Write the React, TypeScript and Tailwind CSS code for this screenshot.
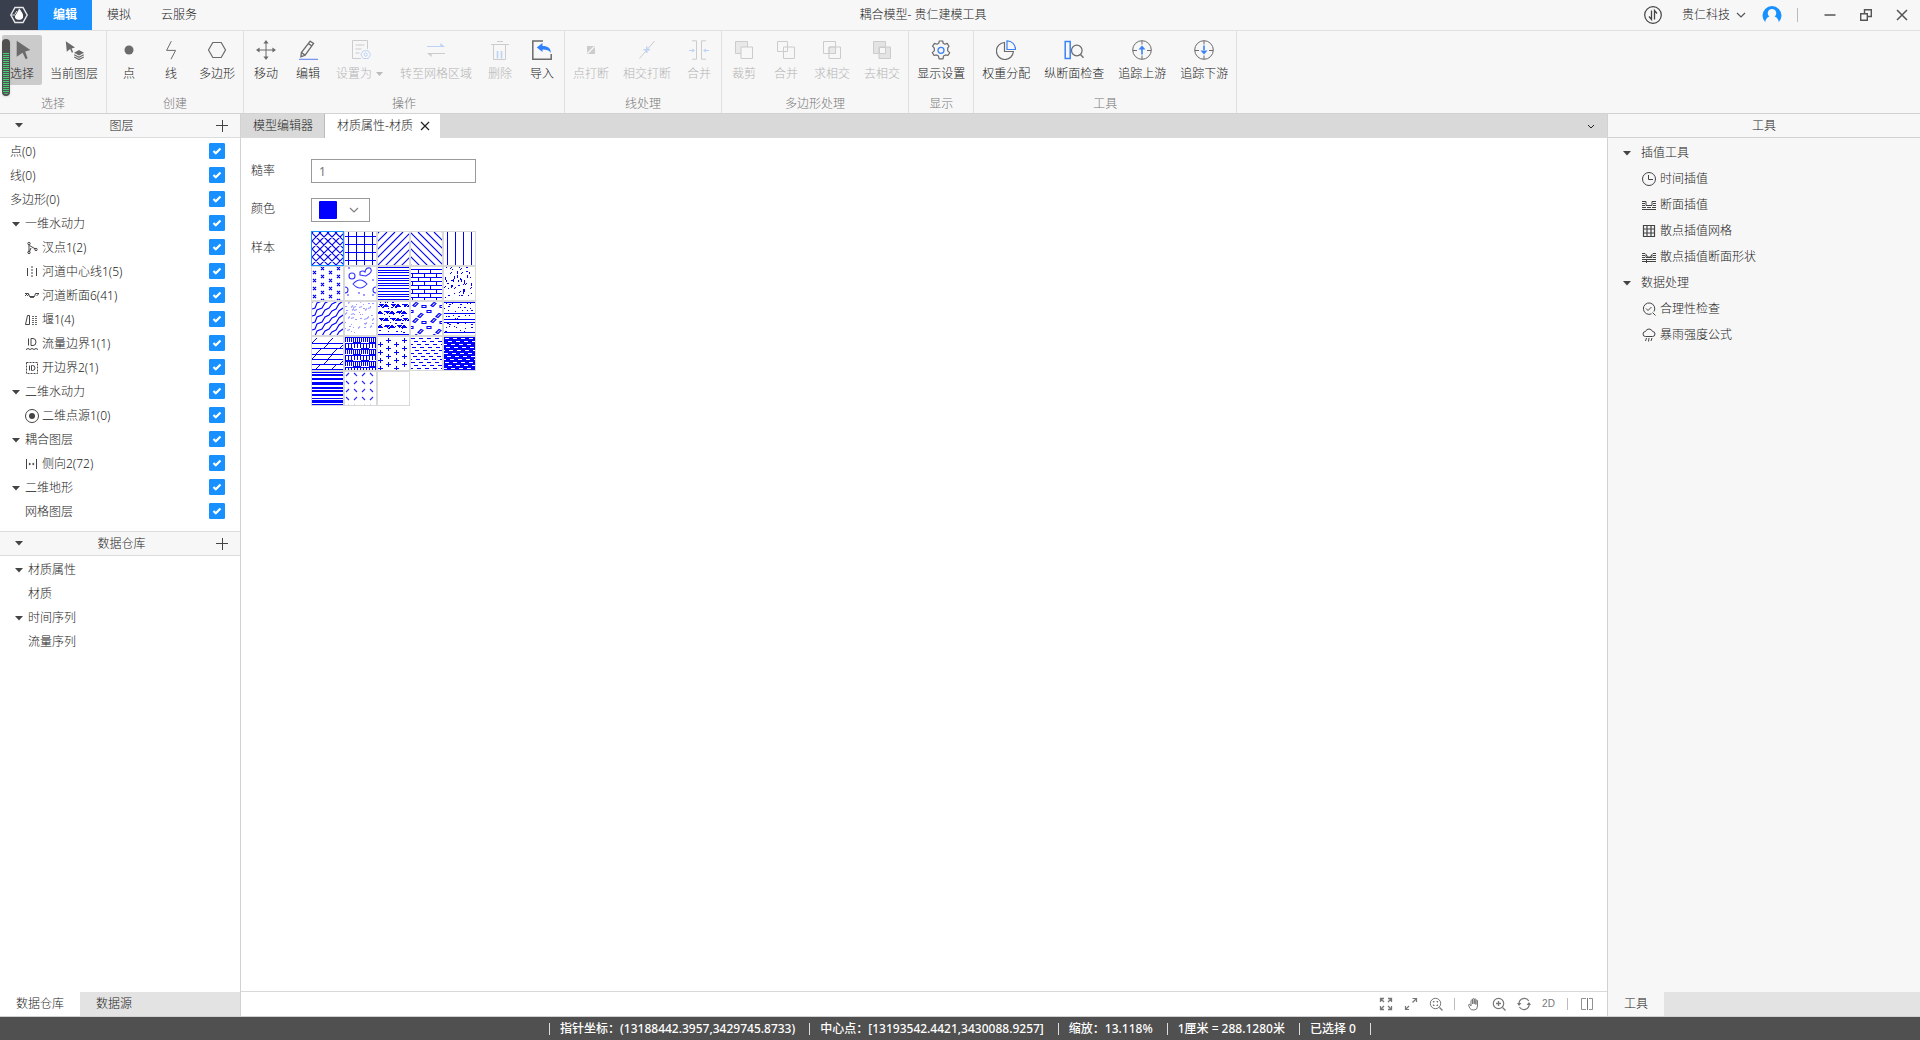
import { useState } from 'react';
import type { ReactNode } from 'react';
import clsx from 'clsx';

const GREY = '#6b6b6b';
const BLUE = '#3b82f6';

function Svg({ size = 20, children, className }: { size?: number; children: ReactNode; className?: string }) {
  return (
    <svg
      width={size}
      height={size}
      viewBox={`0 0 ${size} ${size}`}
      fill="none"
      stroke="currentColor"
      strokeWidth="1"
      className={clsx('shrink-0', className)}
      aria-hidden="true"
    >
      {children}
    </svg>
  );
}

function Caret() {
  return (
    <svg width="8" height="5" viewBox="0 0 8 5" fill="#444" className="shrink-0" aria-hidden="true">
      <path d="M0 0h8L4 4.5z" />
    </svg>
  );
}

const ribbonIcons: Record<string, ReactNode> = {
  select: <path d="M4.7.8 18.4 10l-5.2 1.4 2.4 6.9-1.9 1-3.1-6.6-5.9 4z" fill={GREY} stroke="none" />,
  currentLayer: (
    <>
      <path d="M1.8 1.3 11 7.6 7.6 8.5l1.6 3.6-1.3.6-1.8-3.6-3.3 2.6z" fill={GREY} stroke="none" />
      <path d="m15 10 5 2.8-5 2.8-5-2.8z" fill={GREY} stroke="none" />
      <path d="m10.2 14.8 4.8 2.6 4.8-2.6M10.2 17l4.8 2.6 4.8-2.6" stroke={GREY} strokeWidth="1.2" />
    </>
  ),
  point: <circle cx="10" cy="10" r="4.5" fill={GREY} stroke="none" />,
  line: <path d="M10.3 1.2 5.6 10.4h9L10 19.2" stroke={GREY} />,
  polygon: <path d="m1.5 10 4.3-7.5h8.4l4.3 7.5-4.3 7.5H5.8z" stroke={GREY} strokeWidth="1.2" />,
  move: (
    <>
      <path d="M10 2v16M2 10h16" stroke={GREY} />
      <path d="m10 0 2.6 3.6H7.4zM10 20l2.6-3.6H7.4zM0 10l3.6-2.6v5.2zM20 10l-3.6-2.6v5.2z" fill={GREY} stroke="none" />
    </>
  ),
  edit: (
    <>
      <path d="m12.2 1.2 3.4 2.3-8.5 11.6-4.2 1.7.5-4.3zM10.4 3.6l3.5 2.4M3.4 12.5l3.6 2.6" stroke={GREY} strokeWidth="1.3" />
      <path d="M1 19.3h19" stroke="#5b7bf0" />
    </>
  ),
  setAs: (
    <>
      <path d="M10 18.5H1.5v-18h15V9M4.5 5h9M4.5 9h6M4.5 13h4" stroke={GREY} />
      <path d="M12.2 10.8h5l2.5 3.8-2.5 3.9h-5l-2.4-3.9z" stroke={BLUE} />
      <circle cx="14.7" cy="14.6" r="1.6" stroke={BLUE} />
    </>
  ),
  toGrid: (
    <>
      <path d="M1 6.5h17" stroke={BLUE} />
      <path d="M19 6.9 14.4 3v3.9z" fill={BLUE} stroke="none" />
      <path d="M2 13.5h17" stroke={GREY} />
      <path d="M1 13.1 5.6 17v-3.9z" fill={GREY} stroke="none" />
    </>
  ),
  remove: (
    <>
      <path d="M1 4.5h18M7 1.5h6M3.5 5v14.5h12V5" stroke={GREY} />
      <path d="M7.5 11v7.5M11.5 11v7.5" stroke={BLUE} strokeWidth="1.6" />
    </>
  ),
  importIn: (
    <>
      <path d="M11 1H.8v18.2h18.4V14" stroke={GREY} strokeWidth="1.5" />
      <path d="M4.8 7.5 10.5 3v3c5.5 0 8.5 2.5 8.3 7-1.5-2.6-4-3.5-8.3-3.5V12z" fill="#2f80ff" stroke="none" />
    </>
  ),
  breakPoint: (
    <>
      <path d="M6 6h8v8H6z" fill={GREY} stroke="none" />
      <path d="m6.5 13.5 7-7" stroke="#f7f7f7" strokeWidth="1.5" />
    </>
  ),
  breakCross: (
    <>
      <path d="M2.5 18.5 17.5 1" stroke={GREY} />
      <path d="M6.5 9.8H13M9.8 6.5V13" stroke={BLUE} strokeWidth="1.5" />
    </>
  ),
  mergeLine: (
    <>
      <path d="M3 .8h4.5v18.4H3M17 .8h-4.5v18.4H17" stroke={GREY} />
      <path d="M0 10.5h4M20 10.5h-4" stroke={BLUE} />
      <path d="m6 10.5-2.8-2v4zM14 10.5l2.8-2v4z" fill={BLUE} stroke="none" />
    </>
  ),
  clip: (
    <>
      <path d="M1.5 1.5h12v12h-12z" fill="#ccc" stroke={GREY} />
      <path d="M7 7h11.5v11.5H7z" fill="#f7f7f7" stroke={GREY} />
    </>
  ),
  union: <path d="M1.5 1.5h10V7h7v11.5h-11v-7h-6zM7.5 7h4v4.5h-4z" stroke={GREY} />,
  intersect: (
    <>
      <path d="M7 7h6.5v6.5H7z" fill="#ccc" stroke={GREY} />
      <path d="M1.5 1.5h12v12h-12zM7 7h11.5v11.5H7z" stroke={GREY} />
    </>
  ),
  exclude: (
    <>
      <path d="M1.5 1.5h12v12h-12zM7 7h11.5v11.5H7z" fill="#bbb" stroke={GREY} />
      <path d="M7.5 7.5h6v6h-6z" fill="#f7f7f7" stroke={GREY} />
    </>
  ),
  settings: (
    <>
      <path
        d="M8.3 1h3.4l.5 2.3 1.7.9 2.3-.8 1.8 2.8-1.300 1.900v2.800l2 1.700-1.800 2.900-2.400-.6-2 1.200-.5 2.700H8.100l-.6-2.700-2-1.200-2.400.6-1.800-2.900 2-1.700V8.100L1.600 6.200l1.900-2.800 2.400.8 1.800-.9z"
        stroke={GREY}
        strokeWidth="1.2"
        strokeLinejoin="round"
      />
      <circle cx="10" cy="10.3" r="3" stroke={BLUE} strokeWidth="1.3" />
    </>
  ),
  weight: (
    <>
      <path d="M8.5 2.5a8.5 8.5 0 1 0 8.9 9H8.5z" stroke={GREY} strokeWidth="1.2" />
      <path d="M11 .8c5 .2 8.3 3.6 8.6 8.7H11z" stroke={BLUE} strokeWidth="1.2" />
    </>
  ),
  profile: (
    <>
      <path d="M1.2 1.5h5v17h-5z" stroke={BLUE} strokeWidth="1.5" />
      <circle cx="12.8" cy="10.5" r="5.3" stroke={GREY} strokeWidth="1.2" />
      <path d="m16.5 14.5 3 3.2" stroke={GREY} strokeWidth="1.3" />
    </>
  ),
  upstream: (
    <>
      <circle cx="10" cy="10" r="9.3" stroke={GREY} />
      <path d="M10 1v3.5M10 15.5V19M1 10.5h4M15 10.5h4" stroke={GREY} />
      <path d="m10 5.5 3.5 4h-7zM9.2 9h1.6v5.5H9.2z" fill={BLUE} stroke="none" />
    </>
  ),
  downstream: (
    <>
      <circle cx="10" cy="10" r="9.3" stroke={GREY} />
      <path d="M10 1v3.5M10 15.5V19M1 10.5h4M15 10.5h4" stroke={GREY} />
      <path d="m10 14.5 3.5-4h-7zM9.2 5.5h1.6V11H9.2z" fill={BLUE} stroke="none" />
    </>
  ),
};

type Tool = { icon: string; label: string; disabled?: boolean; menu?: boolean };

const ribbon: { title: string; tools: Tool[] }[] = [
  {
    title: '选择',
    tools: [
      { icon: 'select', label: '选择' },
      { icon: 'currentLayer', label: '当前图层' },
    ],
  },
  {
    title: '创建',
    tools: [
      { icon: 'point', label: '点' },
      { icon: 'line', label: '线' },
      { icon: 'polygon', label: '多边形' },
    ],
  },
  {
    title: '操作',
    tools: [
      { icon: 'move', label: '移动' },
      { icon: 'edit', label: '编辑' },
      { icon: 'setAs', label: '设置为', disabled: true, menu: true },
      { icon: 'toGrid', label: '转至网格区域', disabled: true },
      { icon: 'remove', label: '删除', disabled: true },
      { icon: 'importIn', label: '导入' },
    ],
  },
  {
    title: '线处理',
    tools: [
      { icon: 'breakPoint', label: '点打断', disabled: true },
      { icon: 'breakCross', label: '相交打断', disabled: true },
      { icon: 'mergeLine', label: '合并', disabled: true },
    ],
  },
  {
    title: '多边形处理',
    tools: [
      { icon: 'clip', label: '裁剪', disabled: true },
      { icon: 'union', label: '合并', disabled: true },
      { icon: 'intersect', label: '求相交', disabled: true },
      { icon: 'exclude', label: '去相交', disabled: true },
    ],
  },
  { title: '显示', tools: [{ icon: 'settings', label: '显示设置' }] },
  {
    title: '工具',
    tools: [
      { icon: 'weight', label: '权重分配' },
      { icon: 'profile', label: '纵断面检查' },
      { icon: 'upstream', label: '追踪上游' },
      { icon: 'downstream', label: '追踪下游' },
    ],
  },
];

const treeIcons: Record<string, ReactNode> = {
  junction: (
    <>
      <path d="M4 3.5v8M4.5 4.5l6 3.5M4.5 10.5 6 7" />
      <circle cx="4" cy="2.5" r="1.2" />
      <circle cx="4" cy="11.5" r="1.2" />
      <circle cx="11" cy="8.5" r="1.2" />
    </>
  ),
  centerline: (
    <>
      <path d="M2.5 3v8M11.5 3v8" />
      <path d="M7 1v12" strokeDasharray="2 1" />
    </>
  ),
  section: <path d="M0 4.5h3.5l1 3h5l1-3H14M0 7l2.500-2.500M2 7l2-2M11.500 7l2-2M5 7.500l1 1.500 1-1.500 1 1.500 1-1.500" />,
  weir: (
    <>
      <path d="M.5 11.5 2.5 2.5h2v9z" />
      <path d="M7 3.5h6M7 5.5h6M7 7.5h6M7 9.5h6M7 11.5h6" strokeDasharray="2 1" opacity=".8" />
    </>
  ),
  inflow: (
    <>
      <path d="M3.5 1.5v7M6 1.5h2q3 0 3 3.5T8 8.5H6z" />
      <path d="m1 12.5 2-1 2 1 2-1 2 1 2-1 2 1" />
    </>
  ),
  openBoundary: (
    <>
      <path d="M1.5 1.5h11v11h-11z" strokeDasharray="2 1" />
      <path d="M4.5 4.5v5M6.5 4.5h1q2.5 0 2.5 2.5T7.5 9.5h-1z" />
    </>
  ),
  source: (
    <>
      <circle cx="7" cy="7" r="6.5" />
      <circle cx="7" cy="7" r="3" fill="currentColor" stroke="none" />
    </>
  ),
  lateral: (
    <>
      <path d="M1.5 2v10M11.5 2v10" />
      <path d="M3.5 7 5 5.5v3zM9.5 7 8 5.500v3z" fill="currentColor" stroke="none" />
      <path d="M5 7h3" strokeDasharray="1 1" />
    </>
  ),
};

type Node = { id: string; label: string; icon?: string; level: number; group?: boolean };

const layers: Node[] = [
  { id: 'pt', label: '点(0)', level: 0 },
  { id: 'ln', label: '线(0)', level: 0 },
  { id: 'pg', label: '多边形(0)', level: 0 },
  { id: 'h1', label: '一维水动力', level: 0, group: true },
  { id: 'junction', label: '汊点1(2)', icon: 'junction', level: 1 },
  { id: 'center', label: '河道中心线1(5)', icon: 'centerline', level: 1 },
  { id: 'section', label: '河道断面6(41)', icon: 'section', level: 1 },
  { id: 'weir', label: '堰1(4)', icon: 'weir', level: 1 },
  { id: 'inflow', label: '流量边界1(1)', icon: 'inflow', level: 1 },
  { id: 'open', label: '开边界2(1)', icon: 'openBoundary', level: 1 },
  { id: 'h2', label: '二维水动力', level: 0, group: true },
  { id: 'source', label: '二维点源1(0)', icon: 'source', level: 1 },
  { id: 'couple', label: '耦合图层', level: 0, group: true },
  { id: 'lateral', label: '侧向2(72)', icon: 'lateral', level: 1 },
  { id: 'terrain', label: '二维地形', level: 0, group: true },
  { id: 'mesh', label: '网格图层', level: 1 },
];

const store = [
  { label: '材质属性', group: true },
  { label: '材质', group: false },
  { label: '时间序列', group: true },
  { label: '流量序列', group: false },
];

const toolGroups = [
  {
    title: '插值工具',
    items: [
      { label: '时间插值', icon: 'time' },
      { label: '断面插值', icon: 'sectionInterp' },
      { label: '散点插值网格', icon: 'grid' },
      { label: '散点插值断面形状', icon: 'scatterSection' },
    ],
  },
  {
    title: '数据处理',
    items: [
      { label: '合理性检查', icon: 'check' },
      { label: '暴雨强度公式', icon: 'rain' },
    ],
  },
];

const toolIcons: Record<string, ReactNode> = {
  time: (
    <>
      <circle cx="7" cy="7" r="6.5" />
      <path d="M6.5 3v4.5H11" />
    </>
  ),
  sectionInterp: <path d="M0 3.5h4v4h6v-4h4M0 5.5h3M0 7.5h3M11 5.5h3M11 7.5h3M0 9.5h4M5 9.5h4M10 9.5h4M0 11.5h14" />,
  grid: <path d="M1.5 1.5h11v11h-11zM5 1.5v11M9 1.5v11M1.5 5h11M1.5 9h11M4 5h2M8 9h2" strokeWidth="1.2" />,
  scatterSection: (
    <path d="M0 3.5h3l1 1v3h6v-3l1-1h3M0 5.5h3M0 7.5h3M11 5.5h3M11 7.5h3M0 9.5h14M0 11.5h14M4 5l3 2.5L10 5M4.5 10v3" />
  ),
  check: (
    <>
      <path d="M9.5 11.8A5.700 5.700 0 1 1 12 9.500M10.500 10.500l3 3" />
      <path d="m4 6.500 2 2L9.500 5" />
    </>
  ),
  rain: <path d="M3.5 8.5a2.5 2.5 0 0 1 0-5 3.7 3.7 0 0 1 7 0 2.5 2.5 0 0 1 0 5zM4.5 10l-1 3M7 10l-.5 3.500M10 10l-1 3" />,
};

// hatch swatches, drawn in a 31x33 box
const range = (from: number, to: number, step: number) => {
  const out: number[] = [];
  for (let i = from; i <= to; i += step) out.push(i);
  return out;
};
const diagUp = range(-33, 31, 8).map((x) => `M${x} 34l34-34`).join('');
const diagDown = range(-33, 31, 8).map((x) => `M${x} 0l34 34`).join('');
const rows = (ys: number[]) => ys.map((y) => `M0 ${y + 0.5}h31`).join('');
const cols = (xs: number[]) => xs.map((x) => `M${x + 0.5} 0v33`).join('');
const stagger = (draw: (x: number, y: number) => string, ys: [number, number]) =>
  [2, 10, 18, 26].map((x, i) => range(ys[i % 2], 34, 8).map((y) => draw(x, y)).join('')).join('');

// scatter marks with a small fixed-seed generator so they never line up
const scatter = (count: number, seed: number, shapes: string[]) => {
  let s = seed;
  const next = (n: number) => {
    s = (s * 1103515245 + 12345) % 2147483648;
    return Math.floor((s / 2147483648) * n);
  };
  return range(0, count - 1, 1)
    .map((i) => {
      const x = (i % 7) * 4 + next(4);
      const y = Math.floor(i / 7) * 4 + next(3);
      return next(5) === 0 ? '' : `M${x} ${y + 0.5}${shapes[next(shapes.length)]}`;
    })
    .join('');
};
const bricks = range(0, 7, 1)
  .map((r) => `M0 ${r * 4 + 2.5}h31` + [0, 1, 2].map((i) => `M${i * 12 + (r % 2 ? 1.5 : 7.5)} ${r * 4 + 2.5}v4`).join(''))
  .join('');
const slashBricks = [6, 11, 17, 22, 27, 32]
  .map((y, r) => `M0 ${y + 0.5}h31` + [0, 1].map((i) => `M${i * 16 + [0, 12, 4][r % 3]} ${y}l5-5`).join(''))
  .join('');
const basket = range(0, 5, 1)
  .map((r) => {
    const y = r * 6;
    const step = r % 2 ? 3 : 2;
    return range(0, 31, step).map((x) => `M${x + 0.5} ${y}v5`).join('') + `M0 ${y + 0.5}h31M${r % 2 ? 0 : 8} ${y + 5.5}h8M${r % 2 ? 16 : 24} ${y + 5.5}h8`;
  })
  .join('');
const dashRows = (phase: number) =>
  range(0, 11, 1)
    .map((r) => range(-8, 31, 8).map((x) => `M${x + ((r * 3) % 8) + phase} ${r * 3 + 1.5}h4`).join(''))
    .join('');
const waves = range(-32, 34, 7)
  .map((y) => `M0 ${y + 32}l3-1 2-5 5-2 3-5 4-2 3-4 4-2 3-5 4-3`)
  .join('');
const triangles = [2, 9, 16, 23]
  .map((y, r) =>
    range(r % 2 ? -6 : 0, 31, 12)
      .map((x) => `M${x} ${y}h6l-3 3zM${x + 8} ${y - 1}l3 4h-6z`)
      .join(''),
  )
  .join('');
const pebbles = range(0, 4, 1)
  .map((r) =>
    range(0, 3, 1)
      .map((c) => {
        const x = c * 9 + (r % 2 ? -2 : 2);
        const y = r * 8 + (c % 2 ? 3 : 0);
        return (r + c) % 2 ? `M${x} ${y + 0.5}h4v2h-4z` : `M${x} ${y + 3.5}l3-3 2 1-3 3z`;
      })
      .join(''),
  )
  .join('');
const spinning = range(0, 32, 8)
  .map((y, r) =>
    range(0, 24, 8)
      .map((x, c) => ((r + c) % 2 ? `M${x + 1} ${y + 1}l3 3` : `M${x + 1} ${y + 4}l3-3`))
      .join(''),
  )
  .join('');

type Hatch = { name: string; d?: string; smooth?: boolean; opacity?: number; fill?: string; invert?: boolean };

const hatches: Hatch[] = [
  { name: '交叉斜线', d: diagUp + diagDown, smooth: true },
  { name: '网格', d: rows([4, 12, 20, 28]) + cols([3, 11, 19, 27]) },
  { name: '右斜线', d: diagUp, smooth: true },
  { name: '左斜线', d: diagDown, smooth: true },
  { name: '竖线', d: cols([3, 11, 19, 27]) },
  { name: '叉号', d: stagger((x, y) => `M${x - 1} ${y - 1}l3 3M${x - 1} ${y + 2}l3-3`, [5, 1]), smooth: true },
  {
    name: '卵石',
    d: 'M10 9a3 3 0 1 1-6 0 3 3 0 1 1 6 0M8 17q7-8 14 0-7 8-14 0zM21 9l-6-1V5q3-2 5 0 1-5 5-4 3 3-1 6zM0 20a3 3 0 0 1 0 6M31 20a3 3 0 0 0 0 6M4 0v2M27 13h2M13 26h2M18 28h2M2 28h2M27 28h2',
    smooth: true,
    opacity: 0.8,
  },
  { name: '密横线', d: rows([0, 3, 5, 8, 11, 13, 16, 18, 21, 24, 27, 29, 32]) },
  { name: '砖块', d: bricks },
  { name: '砂点', d: scatter(56, 7, ['h1', 'l1 2', 'h2', 'v2', 'l2-1']) },
  { name: '波纹', d: waves, smooth: true },
  { name: '淡砂', d: scatter(56, 21, ['h2', 'l2-2', 'h1', 'l3-1']), smooth: true, opacity: 0.4 },
  { name: '三角', d: rows([32]) + scatter(56, 5, ['h1', 'h2']), fill: triangles },
  { name: '碎石', d: pebbles, smooth: true },
  { name: '层状砂', d: rows([0, 11, 17, 20, 30]) + scatter(56, 11, ['h1', 'h1', 'h2']) },
  { name: '斜砖', d: slashBricks },
  { name: '编织', d: basket },
  { name: '加号', d: stagger((x, y) => `M${x - 2} ${y + 0.5}h5M${x + 0.5} ${y - 2}v5`, [7, 3]) },
  { name: '短横', d: dashRows(0) },
  { name: '反白短横', d: dashRows(1), invert: true },
  { name: '粗横线', d: rows([0, 2, 3, 6, 7, 10, 11, 12, 15, 16, 18, 19, 22, 23, 26, 28, 29, 30, 32]) },
  { name: '旋转短线', d: spinning, smooth: true, opacity: 0.85 },
  { name: '无' },
];

function PanelHeader({ title }: { title: string }) {
  return (
    <div className="flex h-6 items-center border-b border-[#dcdcdc] bg-[#f7f7f7] pl-[15px] pr-3">
      <button type="button" aria-label={`折叠${title}`}>
        <Caret />
      </button>
      <h2 className="flex-1 pl-1 text-center">{title}</h2>
      <button type="button" aria-label={`添加${title}`}>
        <Svg size={12}>
          <path d="M6.5 0v12M0 5.5h12" stroke="#444" />
        </Svg>
      </button>
    </div>
  );
}

function LayerRow({ node }: { node: Node }) {
  const [checked, setChecked] = useState(true);
  return (
    <li className={clsx('flex h-6 items-center pr-[15px]', node.level ? 'pl-[25px]' : node.group ? 'pl-3' : 'pl-[10px]')}>
      {node.group && (
        <button type="button" className="mr-[5px]" aria-label={`展开${node.label}`}>
          <Caret />
        </button>
      )}
      {node.icon && (
        <Svg size={14} className="mr-[3px] text-[#444]">
          {treeIcons[node.icon]}
        </Svg>
      )}
      <label htmlFor={node.id} className="flex-1">
        {node.label}
      </label>
      <span className="relative mb-[2px] flex">
        <input
          id={node.id}
          type="checkbox"
          checked={checked}
          onChange={(e) => setChecked(e.target.checked)}
          className="h-4 w-4 appearance-none rounded-[1px] border border-[#1890ff] bg-white checked:bg-[#1890ff]"
        />
        {checked && (
          <svg width="16" height="16" viewBox="0 0 16 16" className="pointer-events-none absolute inset-0" aria-hidden="true">
            <path d="m4.5 8 2.3 2.3L11.5 5.5" fill="none" stroke="#fff" strokeWidth="2.2" />
          </svg>
        )}
      </span>
    </li>
  );
}

function TitleBar() {
  return (
    <header className="flex h-[31px] items-center border-b border-[#e0e0e0]">
      <div className="flex h-[30px] w-[38px] items-center justify-center bg-[#3a3f4e]">
        <Svg size={18} className="text-[#e8e8e8]">
          <path d="m.8 9 4.2-7.5h8L17.2 9 13 16.5H5z" strokeWidth="1.5" />
          <path d="M9 2.5c4 4.5 4.5 6.5 4 9-.8 3-7 3.2-8 0C4.5 9 7.500 7.500 9 2.500z" fill="#fff" stroke="none" />
          <path d="M1.5 9H5M7 5 5 8" />
        </Svg>
      </div>
      <nav className="flex h-[30px]">
        <button type="button" className="bg-[#1890ff] px-[15px] font-bold text-white">编辑</button>
        <button type="button" className="px-[15px]">模拟</button>
        <button type="button" className="px-[15px]">云服务</button>
      </nav>
      <h1 className="flex-1 text-center">耦合模型- 贵仁建模工具</h1>
      <div className="flex items-center pl-[10px] pr-3">
        <button type="button" aria-label="同步">
          <Svg size={18} className="text-[#444]">
            <circle cx="9" cy="9" r="8.3" strokeWidth="1.2" />
            <path d="M7.5 4.5v9L5 10.5M10.5 13.5v-9l2.5 3" strokeWidth="1.3" />
          </Svg>
        </button>
        <button type="button" className="ml-5 flex items-center gap-[6px]">
          贵仁科技
          <Svg size={10} className="text-[#555]">
            <path d="m1 3 4 4 4-4" strokeWidth="1.2" />
          </Svg>
        </button>
        <button type="button" className="ml-4" aria-label="账户">
          <Svg size={20}>
            <path d="M3.5 17.5a9.5 9.5 0 1 1 13 0z" fill="#1890ff" stroke="none" />
            <path d="M10 4a4.2 4.2 0 0 1 2.6 7.5c2.4.8 4 2.8 4.4 6.5H3c.4-3.7 2-5.7 4.4-6.5A4.2 4.2 0 0 1 10 4z" fill="#f7f7f7" stroke="none" />
          </Svg>
        </button>
        <span className="ml-[15px] h-[14px] w-px bg-[#bbb]" />
        <button type="button" className="ml-[26px] text-[#555]" aria-label="最小化">
          <Svg size={12}>
            <path d="M.5 6h11" strokeWidth="1.5" />
          </Svg>
        </button>
        <button type="button" className="ml-6 text-[#555]" aria-label="还原">
          <Svg size={12}>
            <path d="M.7 4.7h6.6v6.6H.7zM4.5 4V.7h6.800v6.800H8" strokeWidth="1.4" />
          </Svg>
        </button>
        <button type="button" className="ml-6 text-[#555]" aria-label="关闭">
          <Svg size={12}>
            <path d="m1 1 10 10M11 1 1 11" strokeWidth="1.5" />
          </Svg>
        </button>
      </div>
    </header>
  );
}

function Ribbon() {
  return (
    <div className="flex border-b border-[#d2d2d2]">
      {ribbon.map((group) => (
        <section key={group.title} className="flex flex-col border-r border-[#e0e0e0] px-px pt-1">
          <div className="flex">
            {group.tools.map((tool) => (
              <button
                key={tool.label}
                type="button"
                disabled={tool.disabled}
                className={clsx(
                  'mx-px flex h-[50px] min-w-10 flex-col items-center gap-[6px] rounded-[2px] px-[6px] pt-[5px]',
                  tool.icon === 'select' && 'bg-[#cbcbcb]',
                  tool.disabled && 'text-[#b4b4b4]',
                )}
              >
                <Svg className={tool.disabled ? 'opacity-30' : ''}>{ribbonIcons[tool.icon]}</Svg>
                <span className="flex items-center gap-1">
                  {tool.label}
                  {tool.menu && (
                    <svg width="10" height="5" viewBox="0 0 10 5" fill="#bbb" aria-hidden="true">
                      <path d="M0 0h7L3.5 4z" />
                    </svg>
                  )}
                </span>
              </button>
            ))}
          </div>
          <h3 className="mt-[11px] pb-px text-center text-[#777]">{group.title}</h3>
        </section>
      ))}
    </div>
  );
}

function LeftPanel() {
  return (
    <aside className="flex w-[241px] shrink-0 flex-col border-r border-[#d2d2d2] bg-white">
      <PanelHeader title="图层" />
      <ul className="pb-[7px] pt-[2px]">
        {layers.map((node) => (
          <LayerRow key={node.id} node={node} />
        ))}
      </ul>
      <div className="border-t border-[#dcdcdc]">
        <PanelHeader title="数据仓库" />
      </div>
      <ul className="flex-1 pt-[2px]">
        {store.map((item) => (
          <li key={item.label} className={clsx('flex h-6 items-center', item.group ? 'pl-[15px]' : 'pl-7')}>
            {item.group && (
              <button type="button" className="mr-[5px]" aria-label={`展开${item.label}`}>
                <Caret />
              </button>
            )}
            {item.label}
          </li>
        ))}
      </ul>
      <div className="flex h-6 bg-[#e3e3e3]">
        <button type="button" className="bg-white px-4">数据仓库</button>
        <button type="button" className="px-4">数据源</button>
      </div>
    </aside>
  );
}

function MaterialForm() {
  const [value, setValue] = useState('1');
  const [picked, setPicked] = useState(0);
  return (
    <form className="flex flex-1 flex-col gap-[15px] px-[10px] pt-[21px]">
      <div className="flex">
        <label htmlFor="rough" className="w-[60px] pt-1">糙率</label>
        <input
          id="rough"
          value={value}
          onChange={(e) => setValue(e.target.value)}
          className="h-6 w-[165px] border border-[#999] pl-[7px] font-normal text-[#777] outline-none"
        />
      </div>
      <div className="flex">
        <span className="w-[60px] pt-[3px]">颜色</span>
        <button type="button" aria-label="颜色" className="flex h-6 w-[59px] items-center gap-3 border border-[#999] pl-[7px]">
          <span className="h-[18px] w-[18px] rounded-[1px] bg-[#0000ff]" />
          <Svg size={10} className="text-[#808080]">
            <path d="m1 3 4 4 4-4" strokeWidth="1.2" />
          </Svg>
        </button>
      </div>
      <div className="-mt-[6px] flex">
        <span className="w-[60px] pt-[9px]">样本</span>
        <div className="grid grid-cols-[repeat(5,33px)]">
          {hatches.map((h, i) => (
            <button
              key={h.name}
              type="button"
              aria-label={h.name}
              onClick={() => setPicked(i)}
              className={clsx('h-[35px] border', i === picked ? 'border-[#1890ff]' : 'border-[#d9d9d9]')}
            >
              <svg
                width="31"
                height="33"
                viewBox="0 0 31 33"
                fill="none"
                stroke={h.invert ? '#fff' : '#0000ff'}
                strokeWidth={h.smooth ? 1.1 : 1}
                strokeOpacity={h.opacity ?? 1}
                shapeRendering={h.smooth ? 'auto' : 'crispEdges'}
                className={h.invert ? 'bg-[#0000ff]' : 'bg-white'}
                aria-hidden="true"
              >
                {h.d && <path d={h.d} />}
                {h.fill && <path d={h.fill} fill="#0000ff" stroke="none" />}
              </svg>
            </button>
          ))}
        </div>
      </div>
    </form>
  );
}

function ViewButton({ label, children }: { label: string; children: ReactNode }) {
  return (
    <button type="button" aria-label={label} className="flex w-[25px] justify-center">
      {children}
    </button>
  );
}

function Workspace() {
  return (
    <main className="flex min-w-0 flex-1 flex-col bg-white">
      <div className="flex h-6 bg-[#d9d9d9]">
        <button type="button" className="border-r border-[#bbb] pl-3 pr-[11px]">模型编辑器</button>
        <div className="flex items-center gap-[7px] bg-white pl-3 pr-[10px]">
          <button type="button">材质属性-材质</button>
          <button type="button" aria-label="关闭标签">
            <Svg size={10}>
              <path d="m1 1 8 8M9 1 1 9" strokeWidth="1.2" />
            </Svg>
          </button>
        </div>
        <button type="button" className="ml-auto pr-3" aria-label="更多标签">
          <Svg size={8}>
            <path d="m1 3 3 3 3-3" />
          </Svg>
        </button>
      </div>
      <MaterialForm />
      <div className="flex h-[25px] items-center justify-end border-t border-[#d9d9d9] pr-2 text-[#777]">
        <ViewButton label="全屏">
          <Svg size={14}>
            <path d="M1.5 5V1.5H5M1.5 1.5 5 5M9 1.5h3.5V5M12.5 1.5 9 5M1.5 9v3.500H5M1.500 12.500 5 9M9 12.500h3.500V9M12.500 12.500 9 9" strokeWidth="1.3" />
          </Svg>
        </ViewButton>
        <ViewButton label="全图">
          <Svg size={14}>
            <path d="M8.5 1.5h4V5M12.5 1.5l-4 4M1.500 9v3.500H5M1.500 12.500 5 9" strokeWidth="1.2" />
          </Svg>
        </ViewButton>
        <ViewButton label="缩放至图层">
          <Svg size={14}>
            <circle cx="6.5" cy="6.5" r="5.2" />
            <path d="m10.500 10.500 3 3M4.500 5.500v-1h1M7.500 4.500h1v1M8.500 7.500v1h-1M5.500 8.500h-1v-1" strokeWidth="1.2" />
          </Svg>
        </ViewButton>
        <span className="mx-[6px] h-3 w-px bg-[#bbb]" />
        <ViewButton label="平移">
          <Svg size={14}>
            <path d="M4 9V3.500q.8-1 1.500 0V7 2q.9-1 1.700 0v5V2.300q.9-1 1.700 0V7.500v-4q.9-.9 1.600 0V9q0 4-3.500 4T3 11.500L1.500 8q.6-1.300 1.500-.5z" />
          </Svg>
        </ViewButton>
        <ViewButton label="放大">
          <Svg size={14}>
            <circle cx="6.5" cy="6.5" r="5.2" strokeWidth="1.2" />
            <path d="m10.500 10.500 3 3M4 6.500h5M6.500 4v5" strokeWidth="1.3" />
          </Svg>
        </ViewButton>
        <ViewButton label="刷新">
          <Svg size={14}>
            <path d="M2 6.500a5.300 5.300 0 0 1 9.800-2.500M12.200 7.500a5.300 5.300 0 0 1-9.800 2.500" strokeWidth="1.2" />
            <path d="m0 6 2 3 2.500-3zM9.500 8l2.500-3 2 3z" fill="currentColor" stroke="none" />
          </Svg>
        </ViewButton>
        <ViewButton label="二维视图">
          <span className="font-['Liberation_Sans',sans-serif] text-[10px]">2D</span>
        </ViewButton>
        <span className="mx-[6px] h-3 w-px bg-[#bbb]" />
        <ViewButton label="分屏">
          <Svg size={14}>
            <path d="M6 1.5H1.5v11H6M9 1.5h3.5v11H9" opacity=".8" />
            <path d="M7.5 1v12" />
          </Svg>
        </ViewButton>
      </div>
    </main>
  );
}

function RightPanel() {
  return (
    <aside className="flex w-[313px] shrink-0 flex-col border-l border-[#d2d2d2]">
      <h2 className="flex h-6 items-center justify-center border-b border-[#d2d2d2]">工具</h2>
      <div className="flex-1 pt-[2px]">
        {toolGroups.map((group) => (
          <section key={group.title}>
            <h3 className="flex h-[26px] items-center gap-[10px] pl-[15px]">
              <Caret />
              {group.title}
            </h3>
            <ul>
              {group.items.map((item) => (
                <li key={item.label} className="h-[26px] pl-[34px]">
                  <button type="button" className="flex h-full items-center gap-1">
                    <Svg size={14} className="text-[#444]">{toolIcons[item.icon]}</Svg>
                    {item.label}
                  </button>
                </li>
              ))}
            </ul>
          </section>
        ))}
      </div>
      <div className="flex h-6 bg-[#e3e3e3]">
        <button type="button" className="bg-[#f7f7f7] px-4">工具</button>
      </div>
    </aside>
  );
}

const status = [
  '指针坐标：(13188442.3957,3429745.8733)',
  '中心点：[13193542.4421,3430088.9257]',
  '缩放：13.118%',
  '1厘米 = 288.1280米',
  '已选择 0',
];

export default function App() {
  return (
    <div className="relative flex h-screen flex-col overflow-hidden bg-[#f7f7f7] font-['Noto_Sans','Noto_Sans_CJK_SC',sans-serif] text-[12px] font-light leading-4 text-[#222]">
      <TitleBar />
      <Ribbon />
      <div className="flex min-h-0 flex-1">
        <LeftPanel />
        <Workspace />
        <RightPanel />
      </div>
      <footer className="flex h-6 items-center justify-center border-t border-[#d2d2d2] bg-[#505050] font-medium text-white">
        {status.map((text) => (
          <span key={text} className="flex items-center">
            <span className="mr-[10px] h-3 w-px bg-[#ddd]" />
            <span className="mr-[14px]">{text}</span>
          </span>
        ))}
        <span className="h-3 w-px bg-[#ddd]" />
      </footer>
      {/* level meter */}
      <div className="absolute left-[2px] top-[39px] h-[57px] w-2 rounded-full bg-[#505050] px-px pb-[2px] pt-[14px] shadow">
        <div className="h-full rounded-b bg-[repeating-linear-gradient(#45cf76_0_1px,#505050_1px_2px)]" />
      </div>
    </div>
  );
}
